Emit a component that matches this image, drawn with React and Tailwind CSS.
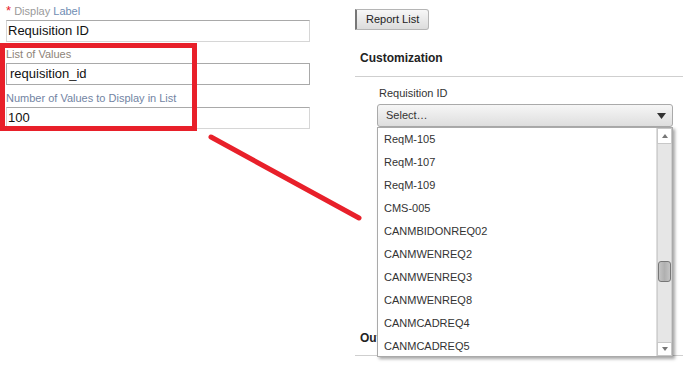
import React from 'react';

const items = [
  'ReqM-105',
  'ReqM-107',
  'ReqM-109',
  'CMS-005',
  'CANMBIDONREQ02',
  'CANMWENREQ2',
  'CANMWENREQ3',
  'CANMWENREQ8',
  'CANMCADREQ4',
  'CANMCADREQ5',
];

function Field({ label, value, labelClass, inputClass }) {
  return (
    <div>
      <div className={`h-[14px] text-[11px] leading-[14px] ${labelClass}`}>{label}</div>
      <div
        className={`mt-[2px] flex h-[22px] w-[304px] items-center bg-white px-[1px] text-[13px] text-[#111] ${inputClass}`}
      >
        {value}
      </div>
    </div>
  );
}

export default function App() {
  return (
    <div
      className="relative h-[366px] w-[683px] overflow-hidden bg-white"
      style={{ fontFamily: '"Liberation Sans", Arial, sans-serif' }}
    >
      <div className="flex">
        {/* left form column */}
        <div className="w-[355px] pl-[6px] pt-[4px]">
          <Field
            label={
              <span>
                <span className="text-[13px] text-[#e8202a]">*</span>{' '}
                <span className="text-[#9a9a9a]">Display</span> <span className="text-[#6f8db3]">Label</span>
              </span>
            }
            value="Requisition ID"
            inputClass="border border-[#d6d6d6] border-t-[#a9a9a9]"
          />
          <div className="mt-[5px]">
            <Field
              label="List of Values"
              labelClass="text-[#8d8378]"
              value={<span className="pl-[2px]">requisition_id</span>}
              inputClass="border border-[#a9a9a9]"
            />
          </div>
          <div className="mt-[6px]">
            <Field
              label="Number of Values to Display in List"
              labelClass="text-[#7284a3]"
              value="100"
              inputClass="border border-[#d6d6d6] border-t-[#a9a9a9]"
            />
          </div>
        </div>

        {/* right column */}
        <div className="flex-1 pt-[9px]">
          <button className="flex h-[21px] items-center rounded-r-[3px] border border-l-2 border-[#b5b5b5] border-l-[#777] bg-gradient-to-b from-[#f7f7f7] to-[#dcdcdc] px-[9px] text-[11px] text-[#222]">
            Report List
          </button>
          <div className="mt-[21px] pl-[5px] text-[12px] font-bold leading-[14px] text-[#222]">Customization</div>
          <div className="mt-[11px] h-px bg-[#cfcfcf]" />
          <div className="mt-[9px] pl-[24px] text-[11px] leading-[14px] text-[#333]">Requisition ID</div>
          <div className="ml-[22px] mr-[10px] mt-[4px] flex h-[23px] items-center justify-between rounded-[3px] border border-[#aaa] bg-gradient-to-b from-[#f6f6f6] to-[#dedede] pl-[8px] pr-[6px] text-[11px] text-[#333]">
            <span>Select…</span>
            <svg width="9" height="6" viewBox="0 0 9 6">
              <path d="M0 0h9L4.5 6z" fill="#333" />
            </svg>
          </div>
          <div className="mt-[204px] pl-[5px] text-[12px] font-bold leading-[14px] text-[#222]">Outputs</div>
          <div className="mt-[10px] h-px bg-[#cfcfcf]" />
        </div>
      </div>

      {/* open dropdown list */}
      <div className="absolute left-[377px] top-[127px] flex h-[230px] w-[296px] border border-[#aaa] bg-white shadow-[2px_2px_3px_rgba(0,0,0,0.35)]">
        <div className="flex-1">
          {items.map((item) => (
            <div key={item} className="flex h-[23px] items-center pl-[6px] text-[11px] text-[#333]">
              {item}
            </div>
          ))}
        </div>
        <div className="flex w-[16px] flex-col border-l border-[#ddd] bg-[#f0f0f0]">
          <div className="flex h-[16px] items-center justify-center border border-[#c8c8c8] bg-white">
            <svg width="6" height="4" viewBox="0 0 6 4">
              <path d="M0 4h6L3 0z" fill="#777" />
            </svg>
          </div>
          <div className="relative flex-1 border-x border-[#cfcfcf] bg-[#e6e6e6]">
            <div className="absolute left-0 right-0 top-[117px] h-[21px] rounded-[3px] border border-[#777] bg-gradient-to-r from-[#c4c4c4] via-[#b0b0b0] to-[#c4c4c4]" />
          </div>
          <div className="flex h-[14px] items-center justify-center border border-[#c8c8c8] bg-white">
            <svg width="6" height="4" viewBox="0 0 6 4">
              <path d="M0 0h6L3 4z" fill="#777" />
            </svg>
          </div>
        </div>
      </div>

      {/* annotation overlay */}
      <div className="pointer-events-none absolute left-0 top-[43px] h-[88px] w-[197px] border-[5px] border-[#e8202a]" />
      <svg className="pointer-events-none absolute left-0 top-0" width="683" height="366">
        <line x1="211" y1="137" x2="359" y2="218" stroke="#e8202a" strokeWidth="5" strokeLinecap="round" />
      </svg>
    </div>
  );
}
